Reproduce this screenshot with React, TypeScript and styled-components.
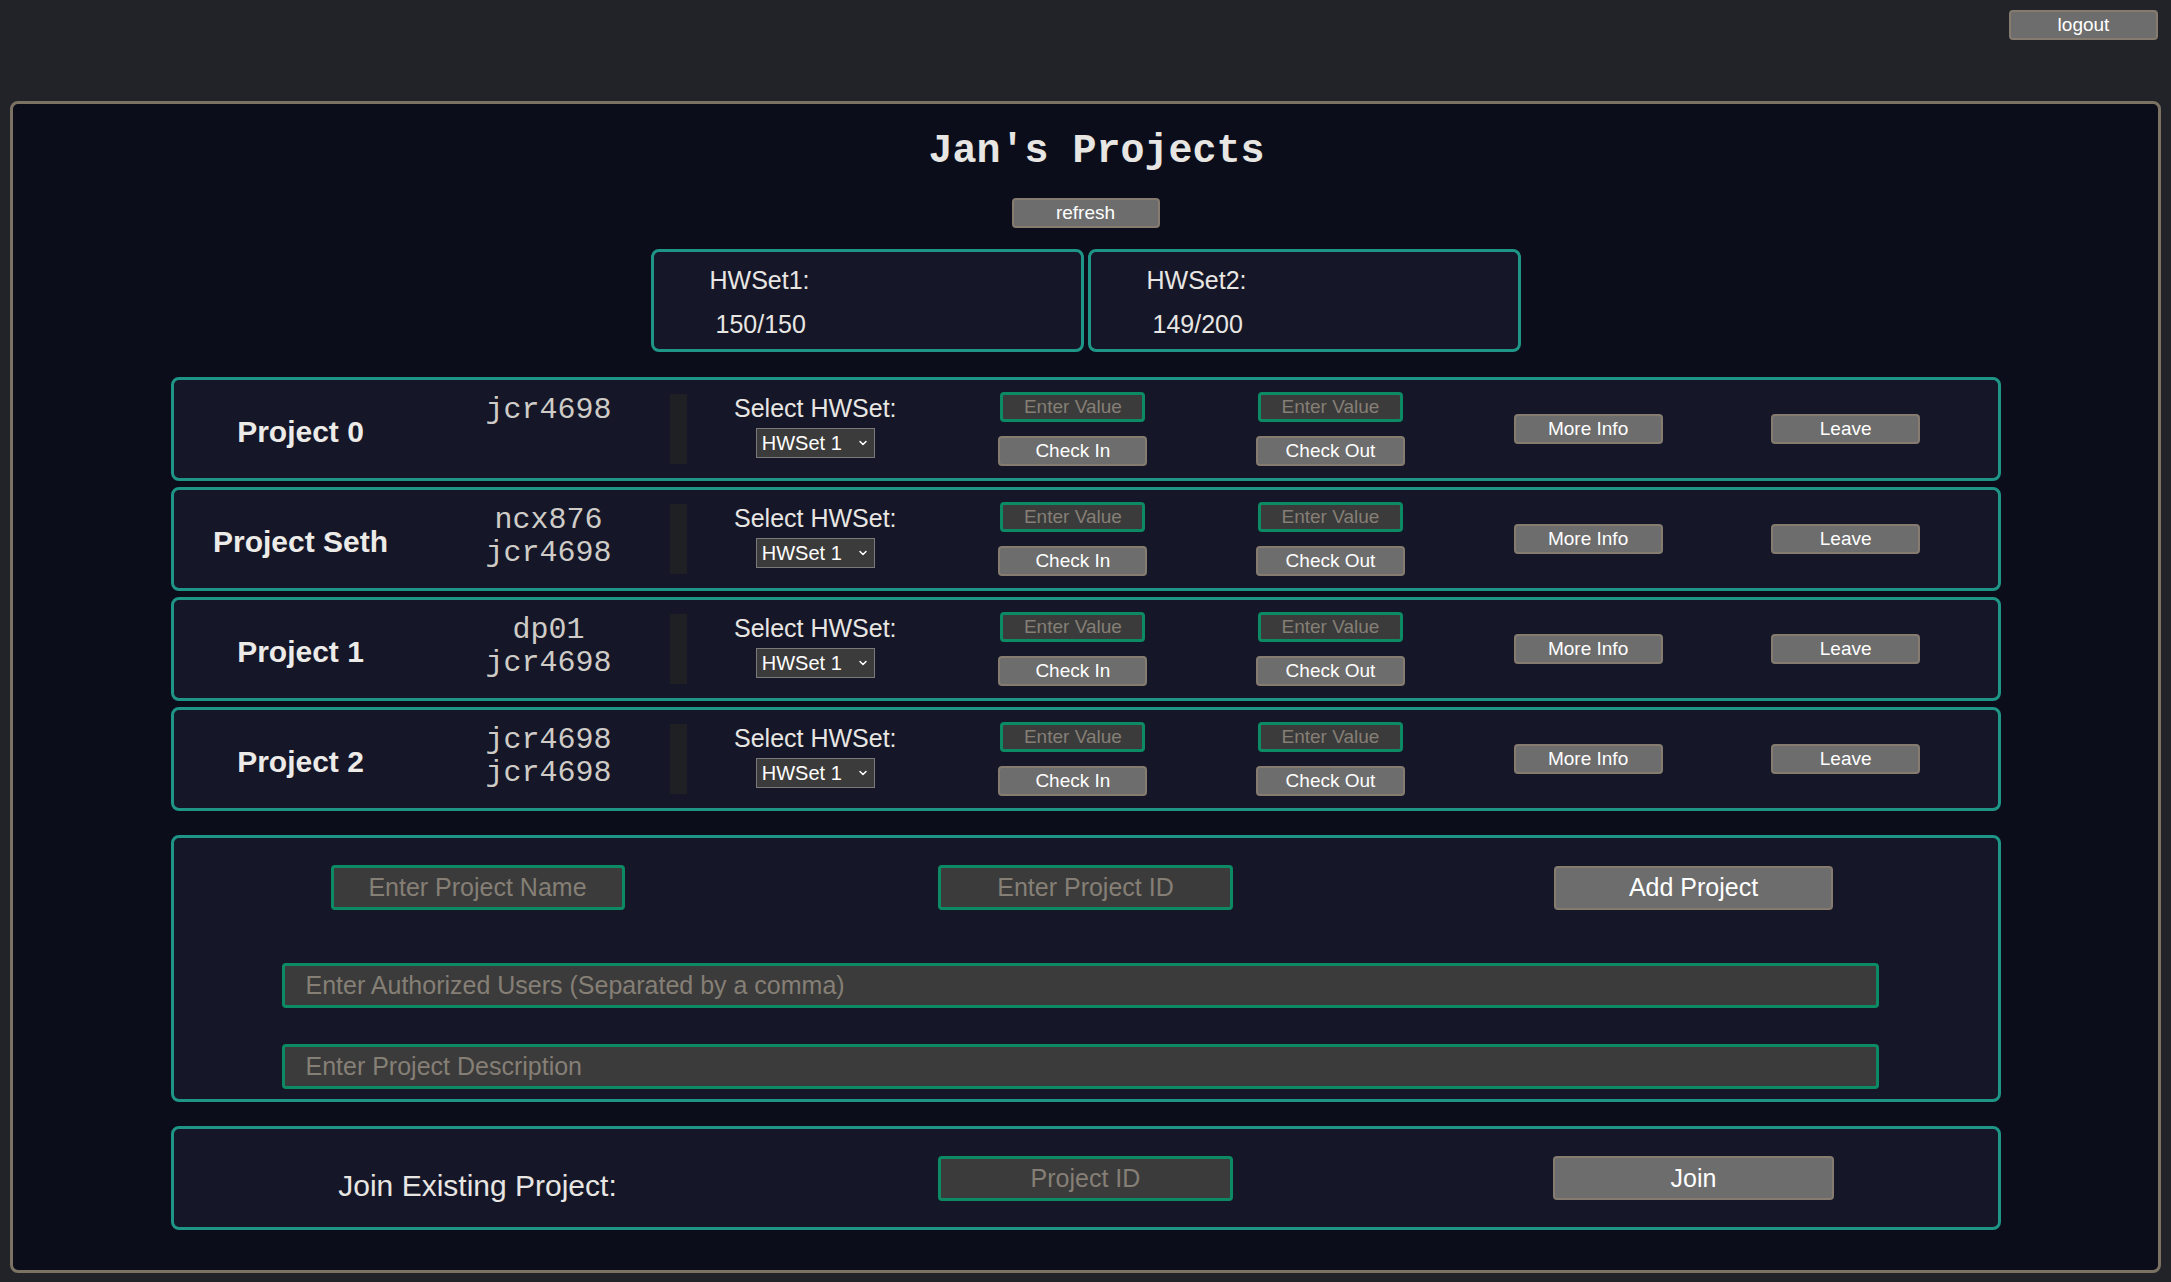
import { ChevronDown } from 'lucide-react';
import styled, { createGlobalStyle } from 'styled-components';

const GlobalStyle = createGlobalStyle`
  html, body {
    margin: 0;
    padding: 0;
    background: #212329;
  }
  body {
    font-family: 'Liberation Sans', Arial, sans-serif;
    color: #e8e6e3;
  }
  * {
    box-sizing: border-box;
  }
`;

const TopBar = styled.header`
  height: 101px;
  display: flex;
  justify-content: flex-end;
  align-items: flex-start;
  padding: 10px 13px 0 0;
`;

const Panel = styled.main`
  margin: 0 10px 10px;
  border: 3px solid #7b7264;
  border-radius: 8px;
  background: #0b0e1a;
  padding: 24px 0 40px;
  display: flex;
  flex-direction: column;
  align-items: center;
`;

const Title = styled.h1`
  margin: 0;
  padding-left: 22px;
  font-family: 'Liberation Mono', 'Courier New', monospace;
  font-weight: 700;
  font-size: 40px;
  line-height: 48px;
  color: #e8e6e3;
`;

const Button = styled.button<{ $size?: 'sm' | 'lg'; $w?: number }>`
  width: ${(p) => p.$w ?? (p.$size === 'lg' ? 280 : 149)}px;
  height: ${(p) => (p.$size === 'lg' ? 44 : 30)}px;
  padding: 0;
  background: #6d6d6d;
  border: 2px solid #857b6e;
  border-radius: 4px;
  color: #ffffff;
  font-family: 'Liberation Sans', Arial, sans-serif;
  font-size: ${(p) => (p.$size === 'lg' ? 25 : 19)}px;
  cursor: pointer;
`;

const RefreshButton = styled(Button)`
  margin-top: 22px;
`;

const HWRow = styled.section`
  margin-top: 21px;
  display: flex;
  gap: 4px;
`;

const HWBox = styled.div`
  width: 433px;
  height: 103px;
  border: 3px solid #1e9587;
  border-radius: 8px;
  background: #151728;
  padding: 6px 0 0 56px;
  font-size: 25px;
  line-height: 44px;
`;

const HWValue = styled.div`
  padding-left: 6px;
`;

const ProjectList = styled.section`
  margin-top: 25px;
  display: flex;
  flex-direction: column;
  gap: 6px;
`;

const Card = styled.div`
  width: 1830px;
  border: 3px solid #1e9587;
  border-radius: 8px;
  background: #151728;
`;

const ProjectRow = styled(Card)`
  height: 104px;
  display: grid;
  grid-template-columns: 254px 242px 17px repeat(5, 257.6px);
  align-items: center;
`;

const ProjectName = styled.div`
  padding-top: 5px;
  text-align: center;
  font-size: 30px;
  font-weight: 700;
  color: #ecebe8;
`;

const Users = styled.div`
  height: 70px;
  text-align: center;
  font-family: 'Liberation Mono', 'Courier New', monospace;
  font-size: 30px;
  line-height: 33px;
  color: #cfccc7;
`;

const Divider = styled.div`
  width: 17px;
  height: 70px;
  background: #1e2023;
`;

const SelectGroup = styled.div`
  align-self: start;
  margin-top: 14px;
  display: flex;
  flex-direction: column;
  align-items: center;
  gap: 6px;
`;

const Label = styled.div`
  font-size: 25px;
  line-height: 28px;
  color: #e8e6e3;
`;

const SelectWrap = styled.div`
  position: relative;
  width: 119px;
  height: 30px;
`;

const Select = styled.select`
  appearance: none;
  width: 100%;
  height: 100%;
  padding: 0 0 0 5px;
  background: #3b3b3b;
  border: 1px solid #7a7a7a;
  border-radius: 0;
  color: #ffffff;
  font-family: 'Liberation Sans', Arial, sans-serif;
  font-size: 20px;
`;

const Chevron = styled(ChevronDown)`
  position: absolute;
  right: 6px;
  top: 9px;
  color: #ffffff;
  pointer-events: none;
`;

const ActionGroup = styled.div`
  display: flex;
  flex-direction: column;
  align-items: center;
  gap: 14px;
`;

const Cell = styled.div`
  display: flex;
  justify-content: center;
  align-items: center;
`;

const Input = styled.input<{ $w: number; $h: number; $fs: number; $align?: 'left' | 'center' }>`
  width: ${(p) => p.$w}px;
  height: ${(p) => p.$h}px;
  background: #3b3b3b;
  border: 3px solid #0c8a63;
  border-radius: 4px;
  color: #e8e6e3;
  font-family: 'Liberation Sans', Arial, sans-serif;
  font-size: ${(p) => p.$fs}px;
  text-align: ${(p) => p.$align ?? 'center'};
  padding: 0 ${(p) => (p.$align === 'left' ? 21 : 4)}px;
  outline: none;
  &::placeholder {
    color: #857f76;
  }
`;

const AddCard = styled(Card)`
  margin-top: 24px;
  padding: 27px 0 10px;
`;

const ThreeCols = styled.div`
  display: grid;
  grid-template-columns: repeat(3, 1fr);
  align-items: center;
`;

const WideField = styled.div<{ $gap: number }>`
  margin: ${(p) => p.$gap}px 0 0 108px;
`;

const JoinCard = styled(Card)`
  margin-top: 24px;
  height: 104px;
  display: grid;
  grid-template-columns: repeat(3, 1fr);
  align-items: center;
`;

const JoinLabel = styled.div`
  text-align: center;
  font-size: 30px;
  padding-top: 15px;
  color: #e8e6e3;
`;

const projects = [
  { name: 'Project 0', users: ['jcr4698'] },
  { name: 'Project Seth', users: ['ncx876', 'jcr4698'] },
  { name: 'Project 1', users: ['dp01', 'jcr4698'] },
  { name: 'Project 2', users: ['jcr4698', 'jcr4698'] },
];

function ProjectItem({ name, users }: { name: string; users: string[] }) {
  return (
    <ProjectRow>
      <ProjectName>{name}</ProjectName>
      <Users>
        {users.map((u, i) => (
          <div key={i}>{u}</div>
        ))}
      </Users>
      <Divider />
      <SelectGroup>
        <Label>Select HWSet:</Label>
        <SelectWrap>
          <Select defaultValue="1">
            <option value="1">HWSet 1</option>
            <option value="2">HWSet 2</option>
          </Select>
          <Chevron size={12} strokeWidth={3} />
        </SelectWrap>
      </SelectGroup>
      <ActionGroup>
        <Input $w={145} $h={30} $fs={19} placeholder="Enter Value" />
        <Button type="button">Check In</Button>
      </ActionGroup>
      <ActionGroup>
        <Input $w={145} $h={30} $fs={19} placeholder="Enter Value" />
        <Button type="button">Check Out</Button>
      </ActionGroup>
      <Cell>
        <Button type="button">More Info</Button>
      </Cell>
      <Cell>
        <Button type="button">Leave</Button>
      </Cell>
    </ProjectRow>
  );
}

export default function App() {
  return (
    <>
      <GlobalStyle />
      <TopBar>
        <Button type="button" $w={149}>
          logout
        </Button>
      </TopBar>
      <Panel>
        <Title>Jan's Projects</Title>
        <RefreshButton type="button" $w={148}>
          refresh
        </RefreshButton>
        <HWRow>
          <HWBox>
            <div>HWSet1:</div>
            <HWValue>150/150</HWValue>
          </HWBox>
          <HWBox>
            <div>HWSet2:</div>
            <HWValue>149/200</HWValue>
          </HWBox>
        </HWRow>
        <ProjectList>
          {projects.map((p) => (
            <ProjectItem key={p.name} name={p.name} users={p.users} />
          ))}
        </ProjectList>
        <AddCard>
          <ThreeCols>
            <Cell>
              <Input $w={294} $h={45} $fs={25} placeholder="Enter Project Name" />
            </Cell>
            <Cell>
              <Input $w={295} $h={45} $fs={25} placeholder="Enter Project ID" />
            </Cell>
            <Cell>
              <Button type="button" $size="lg" $w={279}>
                Add Project
              </Button>
            </Cell>
          </ThreeCols>
          <WideField $gap={53}>
            <Input
              $w={1597}
              $h={45}
              $fs={25}
              $align="left"
              placeholder="Enter Authorized Users (Separated by a comma)"
            />
          </WideField>
          <WideField $gap={36}>
            <Input $w={1597} $h={45} $fs={25} $align="left" placeholder="Enter Project Description" />
          </WideField>
        </AddCard>
        <JoinCard>
          <JoinLabel>Join Existing Project:</JoinLabel>
          <Cell>
            <Input $w={295} $h={45} $fs={25} placeholder="Project ID" />
          </Cell>
          <Cell>
            <Button type="button" $size="lg" $w={281}>
              Join
            </Button>
          </Cell>
        </JoinCard>
      </Panel>
    </>
  );
}
